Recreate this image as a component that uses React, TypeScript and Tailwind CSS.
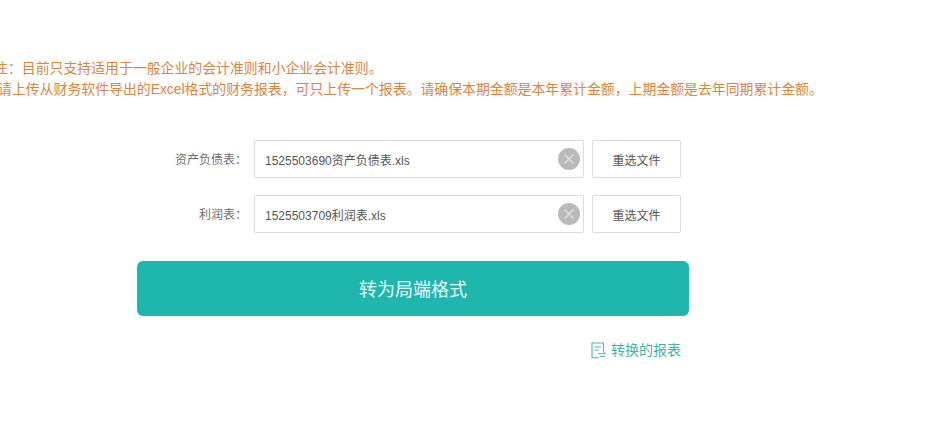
const FONT = "font-['Liberation_Sans','Noto_Sans_CJK_SC',sans-serif]";

const ClearIcon = () => (
  <svg width="22" height="22" viewBox="0 0 22 22" className="shrink-0">
    <circle cx="11" cy="11" r="11" fill="#bababa" />
    <path d="M6.500 6.500l9 9M15.500 6.500l-9 9" stroke="#dedede" strokeWidth="1.6" fill="none" />
  </svg>
);

const ReportIcon = () => (
  <svg width="15" height="17" viewBox="0 0 15 17" fill="none" stroke="#4fb5ae" strokeWidth="1.1" className="shrink-0">
    <path d="M7.500 15.800H1V1h11.500v8.500" />
    <path d="M3.500 5h6.500M3.500 8h4.500" />
    <path d="M7 11.800h7.500M14.500 11.800l-1.800-1.600M14 14.500H8.500" />
  </svg>
);

const FileRow = ({ label, file }: { label: string; file: string }) => (
  <div className="flex items-center h-[38px]">
    <div className="w-[247px] pt-[2px] text-right text-[12px] text-[#6e6e6e] shrink-0">{label}</div>
    <div className="ml-[7px] w-[330px] h-full flex items-center justify-between border border-[#dcdcdc] rounded-[2px] pl-[10px] pr-[3px] text-[12px] text-[#555555]">
      <span className="pt-[4px]">{file}</span>
      <ClearIcon />
    </div>
    <button className="ml-[8px] w-[89px] h-full border border-[#dcdcdc] rounded-[2px] bg-white pt-[4px] text-[12px] text-[#555555]">
      重选文件
    </button>
  </div>
);

export default function App() {
  return (
    <div className={`${FONT} w-[947px] h-[436px] overflow-hidden bg-white`}>
      <div className="pt-[58px] text-[13.88px] leading-[20px] text-[#d9853f] whitespace-nowrap">
        <p className="ml-[-6px]">注：目前只支持适用于一般企业的会计准则和小企业会计准则。</p>
        <p className="ml-[-2px] mt-[1px]">
          请上传从财务软件导出的Excel格式的财务报表，可只上传一个报表。请确保本期金额是本年累计金额，上期金额是去年同期累计金额。
        </p>
      </div>

      <div className="mt-[41px] flex flex-col gap-[17px]">
        <FileRow label="资产负债表：" file="1525503690资产负债表.xls" />
        <FileRow label="利润表：" file="1525503709利润表.xls" />
      </div>

      <button className="block ml-[137px] mt-[28px] w-[552px] h-[55px] rounded-[6px] bg-[#1fb6ae] pt-[4px] text-[18px] text-[#e9fbf9]">
        转为局端格式
      </button>

      <div className="mt-[24px] ml-[591px] flex items-center gap-[5px] text-[14px] text-[#3fb3ab] whitespace-nowrap">
        <ReportIcon />
        <span>转换的报表</span>
      </div>
    </div>
  );
}
